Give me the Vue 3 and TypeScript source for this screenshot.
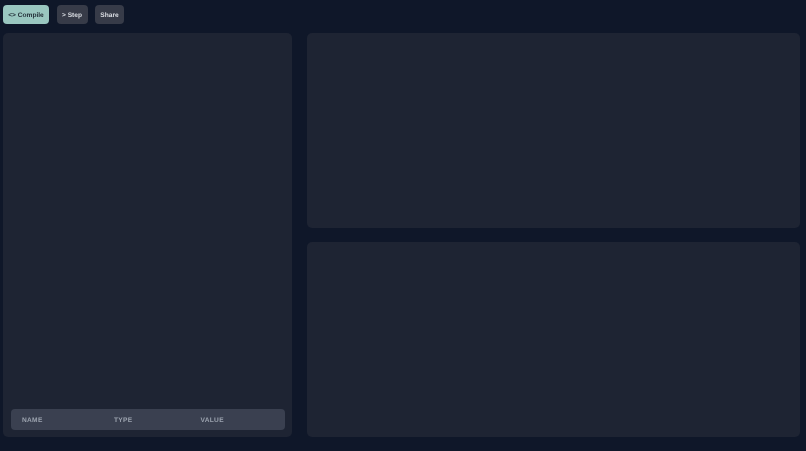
<script setup lang="ts">
const columns: { label: string; width: string }[] = [
  { label: 'NAME', width: '92px' },
  { label: 'TYPE', width: '86.5px' },
  { label: 'VALUE', width: 'auto' },
]
</script>

<template>
  <div class="page">
    <div class="toolbar">
      <button class="btn primary">&lt;&gt; Compile</button>
      <button class="btn">&gt; Step</button>
      <button class="btn">Share</button>
    </div>
    <div class="workspace">
      <section class="panel left">
        <div class="table-head">
          <span v-for="c in columns" :key="c.label" class="col" :style="{ width: c.width }">{{ c.label }}</span>
        </div>
      </section>
      <div class="right">
        <section class="panel"></section>
        <section class="panel"></section>
      </div>
    </div>
  </div>
</template>

<style scoped>
.page {
  width: 806px;
  height: 451px;
  box-sizing: border-box;
  padding: 5px 6px 14px 3px;
  background: #0f1729;
  display: flex;
  flex-direction: column;
  font-family: "Liberation Sans", Arial, sans-serif;
  text-rendering: geometricPrecision;
  overflow: hidden;
}
.toolbar {
  display: flex;
  gap: 7.5px;
  height: 19px;
  margin-bottom: 9px;
  will-change: transform;
}
.btn {
  border: 0;
  height: 19px;
  width: 29px;
  padding: 1px 0 0;
  border-radius: 4px;
  background: #373b48;
  color: #d8dbe1;
  font: 700 6.6px "Liberation Sans", Arial, sans-serif;
  text-rendering: geometricPrecision;
}
.btn:nth-child(1) {
  width: 46px;
}
.btn:nth-child(2) {
  width: 31px;
}
.primary {
  background: #9ac7c0;
  color: #243039;
}
.workspace {
  flex: 1;
  display: grid;
  grid-template-columns: 289px 493px;
  gap: 15px;
  min-height: 0;
}
.right {
  display: grid;
  grid-template-rows: 1fr 1fr;
  gap: 14px;
  min-height: 0;
}
.panel {
  background: #1e2433;
  border-radius: 5px;
}
.left {
  display: flex;
  flex-direction: column;
  justify-content: flex-end;
  padding: 7px 7.5px;
}
.table-head {
  height: 21px;
  box-sizing: border-box;
  display: flex;
  align-items: center;
  padding: 1px 11px 0;
  background: #3a4050;
  border-radius: 4px;
  will-change: transform;
}
.col {
  flex: none;
  font-size: 6.6px;
  font-weight: 700;
  letter-spacing: 0.3px;
  color: #9ca3af;
}
</style>
